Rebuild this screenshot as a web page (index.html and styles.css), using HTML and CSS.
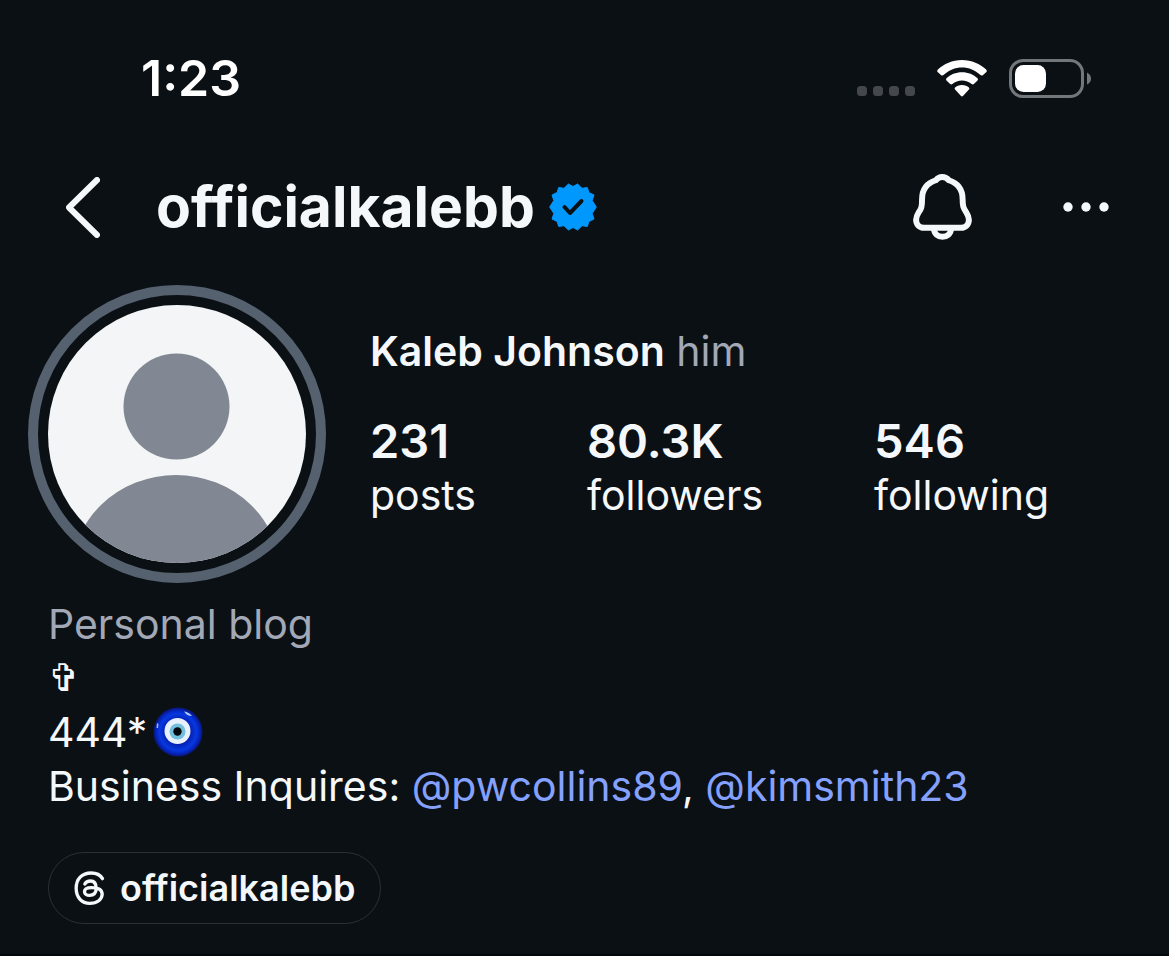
FILE: index.html
```html
<!DOCTYPE html>
<html lang="en">
<head>
<meta charset="utf-8">
<meta name="viewport" content="width=device-width, initial-scale=1">
<title>officialkalebb</title>
<link rel="stylesheet" href="styles.css">
</head>
<body>
<div class="screen">
  <div class="status-bar">
    <time class="clock">1:23</time>
    <div class="status-icons">
      <svg class="signal" viewBox="0 0 58 10" aria-hidden="true"><rect width="10" height="10" rx="3.500"/><rect x="16" width="10" height="10" rx="3.500"/><rect x="32" width="10" height="10" rx="3.500"/><rect x="48" width="10" height="10" rx="3.500"/></svg>
      <svg class="wifi" viewBox="0 0 150 112" aria-hidden="true"><path d="M75 0C104 0 130 12 148 29Q152 33 148 37L138 46Q134 48 130 45C115 31 96 23 75 23S35 31 20 45Q16 48 12 46L2 37Q-2 33 2 29C20 12 46 0 75 0Z"/><path d="M75 37C94 37 110 44 122 55Q125 58 122 62L111 73Q108 76 104 73C96 66 86 62 75 62S54 66 46 73Q42 76 39 73L28 62Q25 58 28 55C40 44 56 37 75 37Z"/><path d="M75 76C84 76 91 79 96 83Q99 86 96 89L78 109Q75 112 72 109L54 89Q51 86 54 83C59 79 66 76 75 76Z"/></svg>
      <svg class="battery" viewBox="0 0 82 39" aria-hidden="true"><rect class="battery-shell" x="1.5" y="1.5" width="72" height="36" rx="12.500"/><rect class="battery-level" x="6" y="6" width="31" height="27" rx="8.500"/><path class="battery-cap" d="M78 13.500Q82 15.500 82 19.500T78 25.500Z"/></svg>
    </div>
  </div>

  <header class="top-bar">
    <button class="icon-button back" type="button" aria-label="Back">
      <svg viewBox="0 0 34 61" aria-hidden="true"><path d="M31 3L3 30.500L31 58"/></svg>
    </button>
    <h1 class="handle">officialkalebb</h1>
    <svg class="verified" viewBox="-24 -24 48 48" role="img" aria-label="Verified">
      <path class="seal" d="M0 -20.500L4.600 -23L9 -18.700L14.300 -19.500L15.900 -14.500L21 -12L19.200 -6.500L23.300 0L19.200 6.500L21 12L15.900 14.500L14.300 19.500L9 18.700L4.600 23L0 20.500L-4.600 23L-9 18.700L-14.300 19.500L-15.900 14.500L-21 12L-19.200 6.500L-23.300 0L-19.200 -6.500L-21 -12L-15.900 -14.500L-14.300 -19.500L-9 -18.700L-4.600 -23Z"/>
      <path class="check" d="M-8.500 0L-3 6L8.500 -6"/>
    </svg>
    <div class="actions">
      <button class="icon-button bell" type="button" aria-label="Notifications">
        <svg viewBox="67 41 178 200" aria-hidden="true"><path d="M155 50C147 50 141 53 136 60C110 68 94 88 94 118C94 140 92 146 84 157C77 168 76 174 76 180C76 194 86 204 100 204H212C226 204 236 194 236 180C236 172 234 166 228 157C219 144 217 138 217 118C217 88 201 68 175 60C170 53 163 50 155 50Z"/><path d="M130 208C131 222 142 231 156 231S181 222 182 208"/></svg>
      </button>
      <button class="icon-button more" type="button" aria-label="More options">
        <svg viewBox="0 0 46 10" aria-hidden="true"><circle cx="5" cy="5" r="4.700"/><circle cx="23" cy="5" r="4.700"/><circle cx="41" cy="5" r="4.700"/></svg>
      </button>
    </div>
  </header>

  <main>
    <section class="profile">
      <svg class="avatar" viewBox="0 0 298 298" role="img" aria-label="Profile picture">
        <defs><clipPath id="face"><circle cx="149" cy="149" r="129"/></clipPath></defs>
        <circle class="ring" cx="149" cy="149" r="144"/>
        <circle class="disc" cx="149" cy="149" r="129"/>
        <g class="person" clip-path="url(#face)"><circle cx="148.500" cy="121.500" r="53"/><ellipse cx="148" cy="290" rx="105" ry="100"/></g>
      </svg>
      <div class="summary">
        <p class="name"><strong>Kaleb Johnson</strong> <span class="muted">him</span></p>
        <ul class="stats">
          <li><strong>231</strong><span>posts</span></li>
          <li><strong>80.3K</strong><span>followers</span></li>
          <li><strong>546</strong><span>following</span></li>
        </ul>
      </div>
    </section>

    <section class="bio">
      <p class="muted">Personal blog</p>
      <p class="cross">✞</p>
      <p class="eye-line"><span>444*</span>
        <svg class="eye" viewBox="0 0 50 50" role="img" aria-label="Nazar amulet">
          <defs><radialGradient id="glass"><stop offset="0" stop-color="#0428b8"/><stop offset=".5" stop-color="#0420b0"/><stop offset=".75" stop-color="#0738e0"/><stop offset=".88" stop-color="#0525c0"/><stop offset="1" stop-color="#0a1470"/></radialGradient></defs>
          <circle cx="25" cy="25" r="24.500" fill="url(#glass)"/>
          <path d="M31 4.500Q36 5 39 9Q34 9 31 4.500Z" fill="#b9ccff"/><path d="M3.500 21L4 16L5.500 17L5 21Z" fill="#9db5ff"/>
          <circle cx="24.500" cy="24" r="13" fill="#e9f0fd"/><circle cx="24.500" cy="24.500" r="8" fill="#72bfdc"/><circle cx="24.500" cy="24.500" r="4.200" fill="#02070c"/>
        </svg>
      </p>
      <p>Business Inquires: <a href="#pwcollins89">@pwcollins89</a>, <a href="#kimsmith23">@kimsmith23</a></p>
    </section>

    <a class="threads-link" href="#threads">
      <svg viewBox="103 93 92 102" aria-hidden="true"><path d="M188 116C181 104 170 99 154 99C126 99 109 117 109 145C109 173 126 190 150 190C172 190 187 178 187 163C187 149 173 143 155 143C142 143 134 148 134 155C134 162 141 166 149 166C162 166 169 158 169 145C169 130 163 123 152 123C144 123 138 126 135 132"/></svg>
      <span>officialkalebb</span>
    </a>
  </main>
</div>
</body>
</html>
```

FILE: styles.css
```css
* { box-sizing: border-box; }

body {
  margin: 0;
  background: #0b1014;
  color: #f5f8fa;
  font: 400 41px/54px Inter, "Liberation Sans", sans-serif;
}

h1, p, ul { margin: 0; padding: 0; }
ul { list-style: none; }
strong { font-weight: 600; }
svg { display: block; flex: none; }
a { color: #85a1ff; text-decoration: none; }

.screen {
  min-height: 100vh;
  padding: 48px 48px 30px;
  border-bottom: 2px solid #05080b;
}

.status-bar {
  display: flex;
  align-items: center;
  justify-content: space-between;
  height: 60px;
  padding: 0 30px 0 93px;
}

.clock { font-size: 50px; font-weight: 600; color: #fff; }
.status-icons { display: flex; align-items: center; gap: 22px; }
.signal { width: 58px; height: 10px; margin-top: 26px; fill: #44474b; }
.wifi { width: 50px; height: 37px; fill: #fff; }
.battery { width: 82px; height: 39px; }
.battery-shell { fill: none; stroke: #74777a; stroke-width: 3; }
.battery-level { fill: #fff; }
.battery-cap { fill: #74777a; }

.top-bar {
  display: flex;
  align-items: center;
  height: 80px;
  margin-top: 59px;
  padding: 0 12px 0 18px;
}

.icon-button {
  padding: 0;
  border: 0;
  background: none;
  color: inherit;
  cursor: pointer;
}

.back svg { width: 34px; height: 61px; fill: none; stroke: currentColor; stroke-width: 6; stroke-linecap: round; stroke-linejoin: round; }
.handle { margin-left: 56px; font-size: 57px; font-weight: 700; line-height: 64px; font-variant-ligatures: none; }
.verified { width: 48px; height: 48px; margin-left: 14px; }
.seal { fill: #0098fd; stroke: #0098fd; stroke-width: 1; stroke-linejoin: round; }
.check { fill: none; stroke: #0b1014; stroke-width: 4; stroke-linecap: round; stroke-linejoin: round; }
.actions { display: flex; align-items: center; gap: 91px; margin-left: auto; }
.bell svg { width: 59px; height: 66px; fill: none; stroke: currentColor; stroke-width: 18; stroke-linejoin: round; }
.more svg { width: 46px; height: 10px; fill: currentColor; }

.profile {
  display: flex;
  align-items: center;
  gap: 44px;
  margin: 38px 0 0 -20px;
}

.avatar { width: 298px; height: 298px; }
.ring { fill: none; stroke: #566170; stroke-width: 10; }
.disc { fill: #f3f5f7; }
.person { fill: #828893; }

.summary { padding-bottom: 22px; }
.muted { color: #a2a8b6; }
.stats { display: flex; gap: 111px; margin-top: 36px; }
.stats li { display: flex; flex-direction: column; }
.stats strong { font-size: 47px; }

.bio { margin-top: 14px; }
.cross { font-family: "DejaVu Sans", sans-serif; font-size: 38px; }
.eye-line { display: flex; align-items: center; gap: 6px; }
.eye { width: 50px; height: 50px; }

.threads-link {
  display: inline-flex;
  align-items: center;
  gap: 15px;
  height: 72px;
  margin-top: 39px;
  padding: 0 25px;
  border: 1px solid #2b3034;
  border-radius: 36px;
  color: inherit;
  font-size: 36px;
  font-weight: 600;
  font-variant-ligatures: none;
}

.threads-link svg { width: 31px; height: 34px; fill: none; stroke: currentColor; stroke-width: 10; stroke-linecap: round; }
```
